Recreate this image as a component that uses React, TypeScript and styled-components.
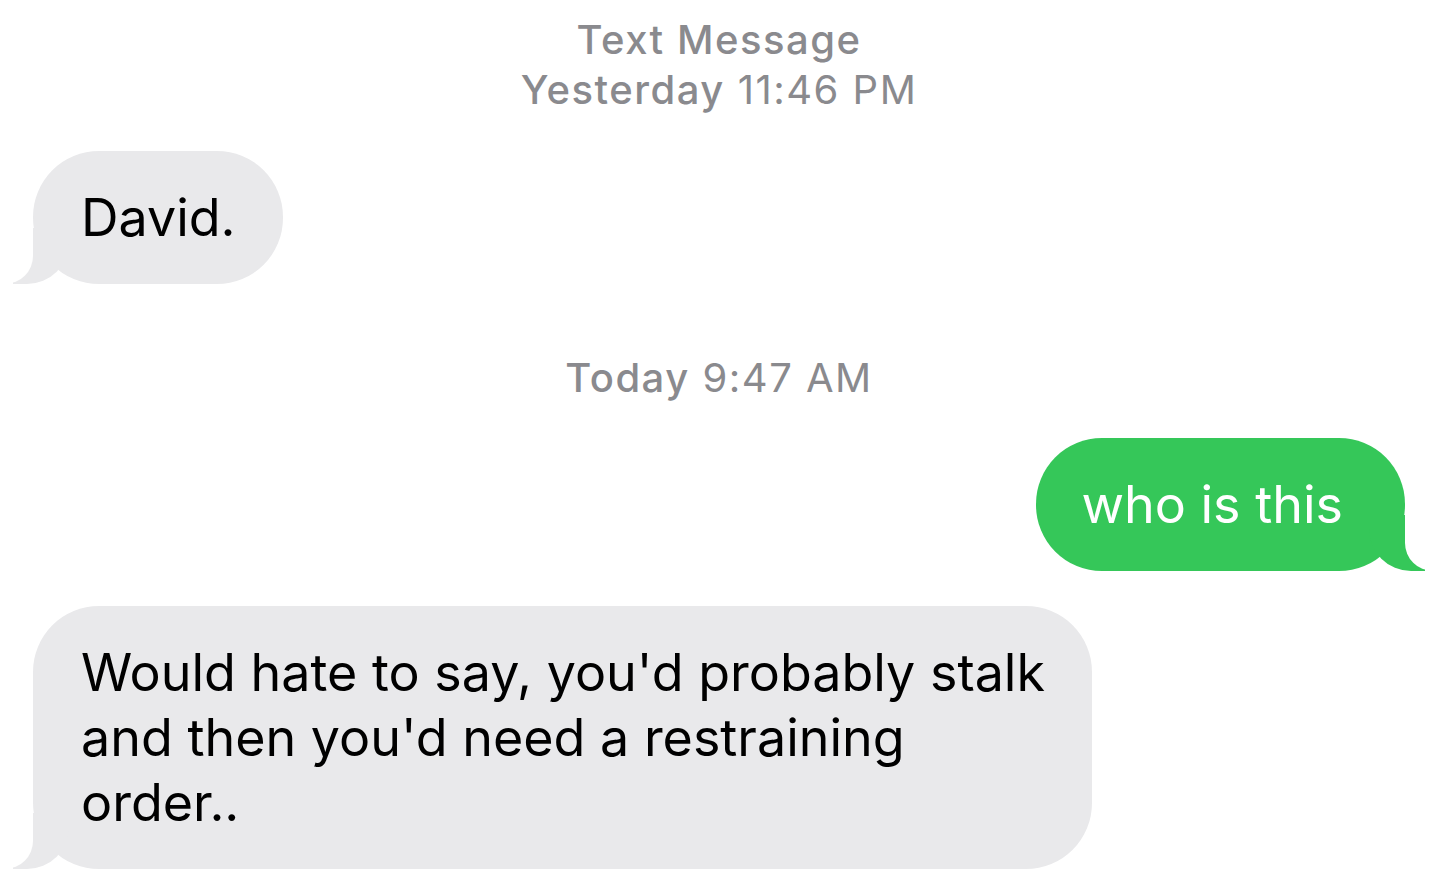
import styled, { createGlobalStyle } from 'styled-components';

const GlobalStyle = createGlobalStyle`
    html, body {
        margin: 0;
        padding: 0;
        background: #ffffff;
    }
    body {
        font-family: Inter, "Liberation Sans", sans-serif;
        -webkit-font-smoothing: antialiased;
    }
`

type Side = 'in' | 'out'

type MessageType = {
    id: number
    side: Side
    lines: string[]
}

const yesterday: MessageType[] = [
    { id: 1, side: 'in', lines: ['David.'] },
]

const today: MessageType[] = [
    { id: 2, side: 'out', lines: ['who is this'] },
    { id: 3, side: 'in', lines: ['Would hate to say, you\'d probably stalk', 'and then you\'d need a restraining', 'order..'] },
]

const Bubble = (props: { msg: MessageType }) => {
    const { msg } = props
    return (
        <Row side={msg.side}>
            <BubbleBody side={msg.side}>
                {msg.lines.map((l, i) => (
                    <span key={i}>{l}{i < msg.lines.length - 1 && <br />}</span>
                ))}
            </BubbleBody>
        </Row>
    )
}

const App = () => {
    return (
        <>
            <GlobalStyle />
            <Thread>
                <Stamp>
                    <StampStrong>Text Message</StampStrong>
                    <div><StampStrong>Yesterday</StampStrong> 11:46 PM</div>
                </Stamp>
                {yesterday.map(m => <Bubble key={m.id} msg={m} />)}
                <Stamp spaced>
                    <div><StampStrong>Today</StampStrong> 9:47 AM</div>
                </Stamp>
                <Group>
                    {today.map(m => <Bubble key={m.id} msg={m} />)}
                </Group>
            </Thread>
        </>
    );
};

export default App;

const Thread = styled.div`
    display: flex;
    flex-direction: column;
    padding: 15px 51px 0 33px;
    width: 1456px;
    box-sizing: border-box;
`

const Stamp = styled.div<{ spaced?: boolean }>`
    display: flex;
    flex-direction: column;
    align-items: center;
    font-size: 40px;
    line-height: 50px;
    letter-spacing: 1.5px;
    color: #8a8a8e;
    margin: ${p => p.spaced ? '69px 0 35px' : '0 0 36px'};
`

const StampStrong = styled.span`
    font-weight: 500;
`

const Group = styled.div`
    display: flex;
    flex-direction: column;
    gap: 35px;
`

const Row = styled.div<{ side: Side }>`
    display: flex;
    justify-content: ${p => p.side === 'out' ? 'flex-end' : 'flex-start'};
`

const BubbleBody = styled.div<{ side: Side }>`
    position: relative;
    background: ${p => p.side === 'out' ? '#35c759' : '#e9e9eb'};
    color: ${p => p.side === 'out' ? '#ffffff' : '#000000'};
    font-size: 52px;
    line-height: 65px;
    padding: ${p => p.side === 'out' ? '34px 62px 34px 45px' : '34px 47px 34px 48px'};
    border-radius: 66px;

    &::before {
        content: "";
        position: absolute;
        bottom: 0;
        ${p => p.side === 'out' ? 'right: -20px;' : 'left: -20px;'}
        width: 56px;
        height: 56px;
        background: ${p => p.side === 'out' ? '#35c759' : '#e9e9eb'};
        ${p => p.side === 'out' ? 'border-bottom-left-radius: 42px;' : 'border-bottom-right-radius: 42px;'}
    }

    &::after {
        content: "";
        position: absolute;
        bottom: 0;
        ${p => p.side === 'out' ? 'right: -28px;' : 'left: -28px;'}
        width: 28px;
        height: 56px;
        background: #ffffff;
        ${p => p.side === 'out' ? 'border-bottom-left-radius: 28px;' : 'border-bottom-right-radius: 28px;'}
    }
`
